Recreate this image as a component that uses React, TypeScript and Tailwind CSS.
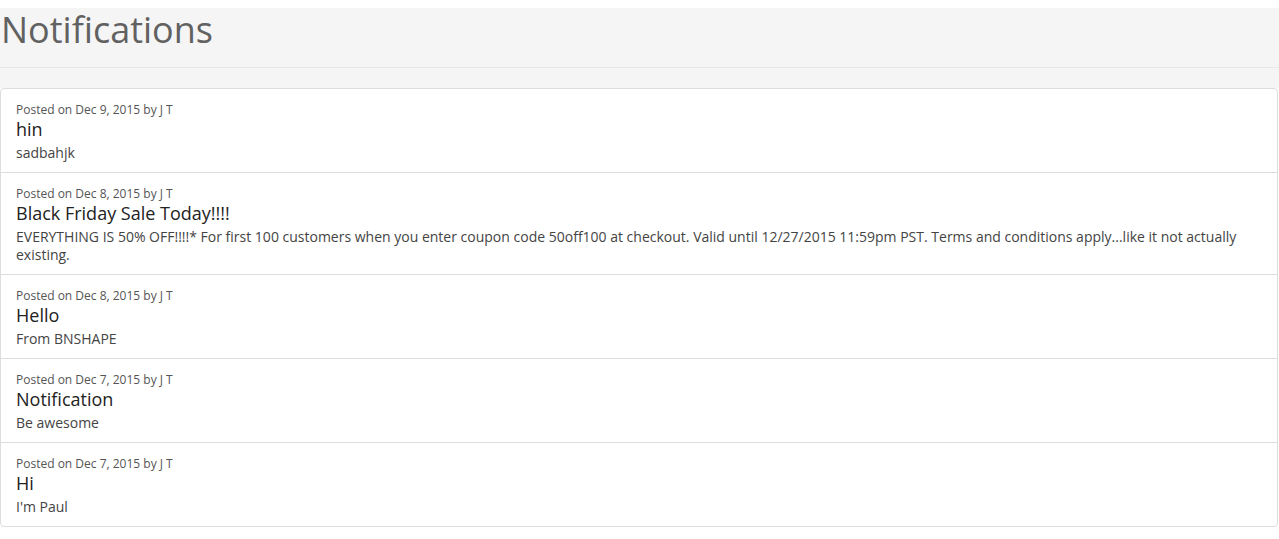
import React from "react";

const items = [
  { date: "Dec 9, 2015", title: "hin", body: "sadbahjk" },
  {
    date: "Dec 8, 2015",
    title: "Black Friday Sale Today!!!!",
    body: "EVERYTHING IS 50% OFF!!!!* For first 100 customers when you enter coupon code 50off100 at checkout. Valid until 12/27/2015 11:59pm PST. Terms and conditions apply...like it not actually existing.",
  },
  { date: "Dec 8, 2015", title: "Hello", body: "From BNSHAPE" },
  { date: "Dec 7, 2015", title: "Notification", body: "Be awesome" },
  { date: "Dec 7, 2015", title: "Hi", body: "I'm Paul" },
];

export default function App() {
  return (
    <div className="min-h-[539px] bg-white pt-[8px]" style={{ fontFamily: '"Open Sans", "Noto Sans", sans-serif' }}>
      <div className="bg-[#f5f5f5] h-[80px]">
        <h1 className="h-[60px] border-b border-[#e8e8e8] text-[36px] leading-[42px] pt-[1px] pl-[1px] text-[#616161] font-normal">
          Notifications
        </h1>
      </div>
      <div className="border border-[#dddddd] rounded-[4px] mr-[1px]">
        {items.map((it, i) => (
          <div key={i} className={`px-[15px] pt-[12px] pb-[10px] ${i > 0 ? "border-t border-[#dddddd]" : ""}`}>
            <div className="text-[12px] leading-[17px] text-[#555555]">Posted on {it.date} by J T</div>
            <div className="text-[18px] leading-[20px] mt-[1px] mb-[5px] text-[#222222]">{it.title}</div>
            <div className="text-[14px] leading-[18px] text-[#444444]">{it.body}</div>
          </div>
        ))}
      </div>
    </div>
  );
}
